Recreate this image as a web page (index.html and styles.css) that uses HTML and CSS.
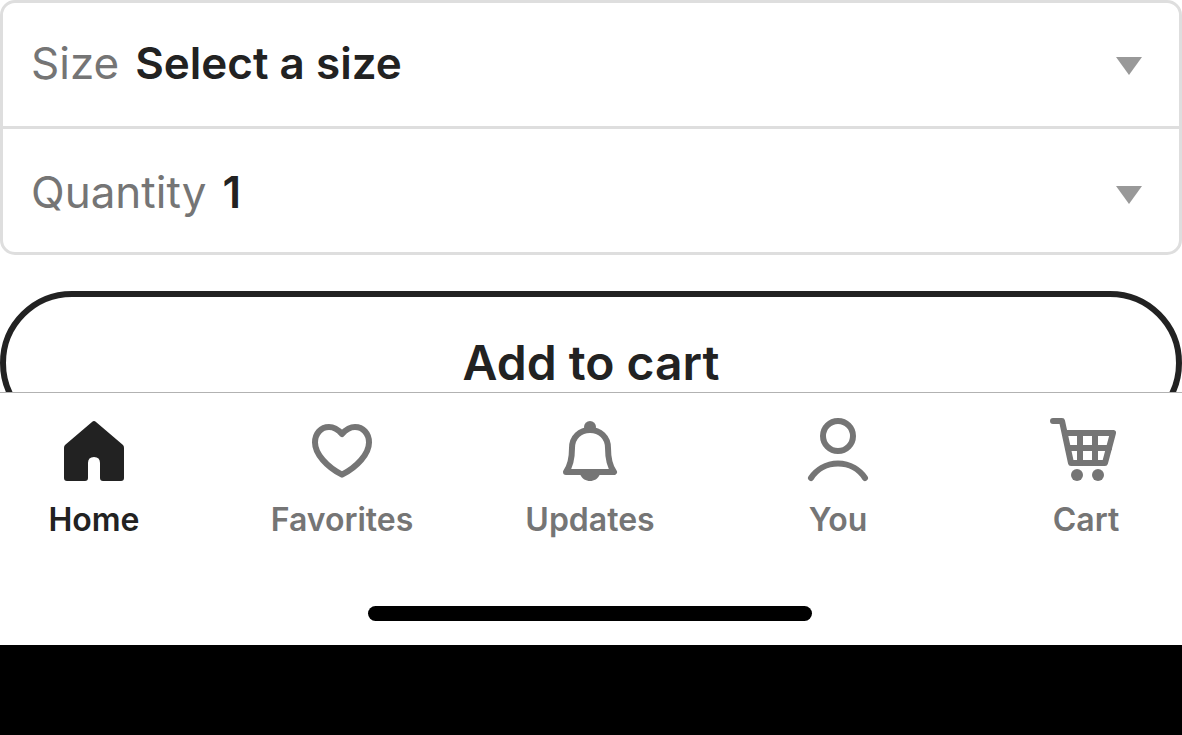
FILE: index.html
```html
<!DOCTYPE html>
<html lang="en">
<head>
<meta charset="utf-8">
<meta name="viewport" content="width=device-width, initial-scale=1">
<title>Add to cart</title>
<link rel="stylesheet" href="styles.css">
</head>
<body>
<main class="content">
  <form class="purchase">
    <div class="options">
      <div class="option">
        <label class="option-label" for="size">Size</label>
        <select class="option-select" id="size"><option>Select a size</option></select>
        <svg class="option-arrow" viewBox="0 0 26 18" aria-hidden="true"><path d="M0 0H26L13 18Z"/></svg>
      </div>
      <div class="option">
        <label class="option-label" for="quantity">Quantity</label>
        <select class="option-select" id="quantity"><option>1</option></select>
        <svg class="option-arrow" viewBox="0 0 26 18" aria-hidden="true"><path d="M0 0H26L13 18Z"/></svg>
      </div>
    </div>
    <button class="add-button" type="button">Add to cart</button>
  </form>
</main>
<nav class="tabs">
  <div class="tab-list">
    <a class="tab tab-active" href="#home">
      <svg class="tab-icon" viewBox="0 0 72 72" aria-hidden="true"><path fill="currentColor" d="M34 7Q36 5 38 7L65 30Q66 31 66 33V63Q66 66 63 66H45Q42 66 42 63V48Q42 42 36 42T30 48V63Q30 66 27 66H9Q6 66 6 63V33Q6 31 7 30Z"/></svg>
      <span>Home</span>
    </a>
    <a class="tab" href="#favorites">
      <svg class="tab-icon" viewBox="0 0 72 72" aria-hidden="true"><path class="line" d="M36 19C32 14.500 28 12 23 12C15 12 9 18.500 9 27.500C9 39 21 52 36 59.700C51 52 63 39 63 27.500C63 18.500 57 12 49 12C44 12 40 14.500 36 19Z"/></svg>
      <span>Favorites</span>
    </a>
    <a class="tab" href="#updates">
      <svg class="tab-icon" viewBox="0 0 72 72" aria-hidden="true"><circle fill="currentColor" cx="36" cy="12" r="6"/><path class="line" d="M12 57C17 50 18 42 18 33C18 22 26 15 36 15S54 22 54 33C54 42 55 50 60 57Z"/><path fill="currentColor" d="M26 59H46C44 64 40 66 36 66S28 64 26 59Z"/></svg>
      <span>Updates</span>
    </a>
    <a class="tab" href="#you">
      <svg class="tab-icon" viewBox="0 0 72 72" aria-hidden="true"><circle class="line" cx="36" cy="21" r="15"/><path class="line" d="M9 63A32.500 32.500 0 0 1 63 63"/></svg>
      <span>You</span>
    </a>
    <a class="tab" href="#cart">
      <svg class="tab-icon" viewBox="0 0 72 72" aria-hidden="true"><path class="line" d="M3 6H12L21 48H55L63 18H15"/><path class="line" d="M18 33H59M30 18V48M45 18V48"/><circle fill="currentColor" cx="27" cy="60" r="6"/><circle fill="currentColor" cx="48" cy="60" r="6"/></svg>
      <span>Cart</span>
    </a>
  </div>
  <div class="home-indicator"></div>
</nav>
<footer class="bottom-band"></footer>
</body>
</html>
```
FILE: styles.css
```css
* {
  box-sizing: border-box;
}

body {
  display: flex;
  flex-direction: column;
  height: 100vh;
  margin: 0;
  background: #fff;
  color: #222;
  font-family: Inter, "Liberation Sans", sans-serif;
}

.content {
  flex: 1 1 0;
  min-height: 0;
  overflow: hidden;
}

.purchase {
  display: flex;
  flex-direction: column;
  gap: 36px;
}

.options {
  border: 3px solid #dedede;
  border-radius: 15px;
}

.option {
  display: flex;
  align-items: center;
  gap: 16px;
  padding: 30px 37px 33px 28px;
}

.option + .option {
  padding-top: 33px;
  padding-bottom: 30px;
  border-top: 3px solid #dedede;
}

.option-label,
.option-select {
  font-size: 44px;
  line-height: 60px;
}

.option-label {
  color: #757575;
  font-weight: 400;
}

.option-select {
  flex: 1;
  min-width: 0;
  height: 60px;
  padding: 0;
  border: 0;
  appearance: none;
  background: transparent;
  color: #222;
  font-family: inherit;
  font-weight: 600;
}

.option-arrow {
  width: 26px;
  height: 18px;
  margin-top: 6px;
  fill: #999;
}

.add-button {
  width: 100%;
  height: 144px;
  padding: 0;
  border: 6px solid #222;
  border-radius: 72px;
  background: #fff;
  color: #222;
  font-family: inherit;
  font-size: 48px;
  font-weight: 600;
  line-height: 60px;
}

.tabs {
  padding: 22px 24px 24px 22px;
  border-top: 1px solid #b2b2b2;
  background: #fff;
}

.tab-list {
  display: flex;
  justify-content: space-between;
}

.tab {
  display: flex;
  flex-direction: column;
  align-items: center;
  gap: 13px;
  width: 144px;
  color: #757575;
  font-size: 32px;
  font-weight: 600;
  line-height: 40px;
  text-decoration: none;
}

.tab-active {
  color: #222;
}

.tab-icon {
  width: 72px;
  height: 72px;
}

.line {
  fill: none;
  stroke: currentColor;
  stroke-width: 6;
  stroke-linecap: round;
  stroke-linejoin: round;
}

.home-indicator {
  width: 444px;
  max-width: 60%;
  height: 15px;
  margin: 66px auto 0;
  border-radius: 8px;
  background: #000;
}

.bottom-band {
  height: 90px;
  background: #000;
}
```
